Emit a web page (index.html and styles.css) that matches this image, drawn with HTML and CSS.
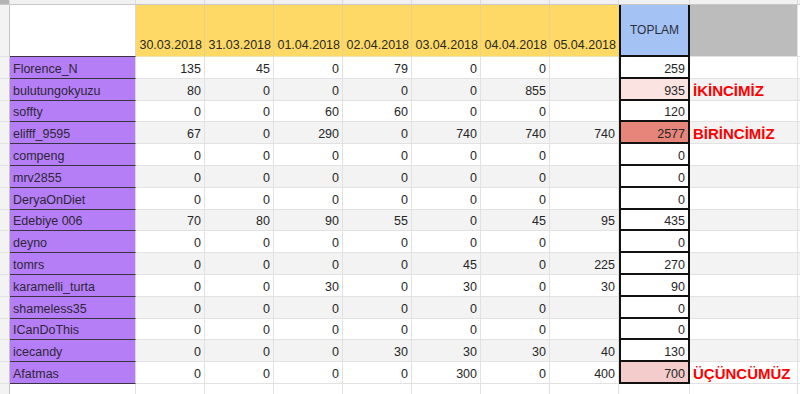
FILE: index.html
```html
<!DOCTYPE html>
<html lang="tr">
<head>
<meta charset="utf-8">
<title>Puan Tablosu</title>
<link rel="stylesheet" href="styles.css">
</head>
<body>
<div class="sheet">
  <div class="row top">
    <div class="c corner"></div><div class="c"></div><div class="c"></div><div class="c"></div><div class="c"></div><div class="c"></div><div class="c"></div><div class="c"></div><div class="c"></div><div class="c"></div><div class="c"></div><div class="c"></div>
  </div>
  <div class="row head">
    <div class="c strip"></div>
    <div class="c name blank"></div>
    <div class="c date">30.03.2018</div>
    <div class="c date">31.03.2018</div>
    <div class="c date">01.04.2018</div>
    <div class="c date">02.04.2018</div>
    <div class="c date">03.04.2018</div>
    <div class="c date">04.04.2018</div>
    <div class="c date">05.04.2018</div>
    <div class="c tot toth">TOPLAM</div>
    <div class="c grayh"></div>
    <div class="c"></div>
  </div>

  <div class="row">
    <div class="c strip"></div><div class="c name">Florence_N</div>
    <div class="c num">135</div><div class="c num">45</div><div class="c num">0</div><div class="c num">79</div><div class="c num">0</div><div class="c num">0</div><div class="c num"></div>
    <div class="c num tot">259</div><div class="c lbl"></div><div class="c"></div>
  </div>
  <div class="row band">
    <div class="c strip"></div><div class="c name">bulutungokyuzu</div>
    <div class="c num">80</div><div class="c num">0</div><div class="c num">0</div><div class="c num">0</div><div class="c num">0</div><div class="c num">855</div><div class="c num"></div>
    <div class="c num tot light">935</div><div class="c lbl">İKİNCİMİZ</div><div class="c"></div>
  </div>
  <div class="row">
    <div class="c strip"></div><div class="c name">soffty</div>
    <div class="c num">0</div><div class="c num">0</div><div class="c num">60</div><div class="c num">60</div><div class="c num">0</div><div class="c num">0</div><div class="c num"></div>
    <div class="c num tot">120</div><div class="c lbl"></div><div class="c"></div>
  </div>
  <div class="row band">
    <div class="c strip"></div><div class="c name">elifff_9595</div>
    <div class="c num">67</div><div class="c num">0</div><div class="c num">290</div><div class="c num">0</div><div class="c num">740</div><div class="c num">740</div><div class="c num">740</div>
    <div class="c num tot red">2577</div><div class="c lbl">BİRİNCİMİZ</div><div class="c"></div>
  </div>
  <div class="row">
    <div class="c strip"></div><div class="c name">compeng</div>
    <div class="c num">0</div><div class="c num">0</div><div class="c num">0</div><div class="c num">0</div><div class="c num">0</div><div class="c num">0</div><div class="c num"></div>
    <div class="c num tot">0</div><div class="c lbl"></div><div class="c"></div>
  </div>
  <div class="row band">
    <div class="c strip"></div><div class="c name">mrv2855</div>
    <div class="c num">0</div><div class="c num">0</div><div class="c num">0</div><div class="c num">0</div><div class="c num">0</div><div class="c num">0</div><div class="c num"></div>
    <div class="c num tot">0</div><div class="c lbl"></div><div class="c"></div>
  </div>
  <div class="row">
    <div class="c strip"></div><div class="c name">DeryaOnDiet</div>
    <div class="c num">0</div><div class="c num">0</div><div class="c num">0</div><div class="c num">0</div><div class="c num">0</div><div class="c num">0</div><div class="c num"></div>
    <div class="c num tot">0</div><div class="c lbl"></div><div class="c"></div>
  </div>
  <div class="row band">
    <div class="c strip"></div><div class="c name">Edebiye 006</div>
    <div class="c num">70</div><div class="c num">80</div><div class="c num">90</div><div class="c num">55</div><div class="c num">0</div><div class="c num">45</div><div class="c num">95</div>
    <div class="c num tot">435</div><div class="c lbl"></div><div class="c"></div>
  </div>
  <div class="row">
    <div class="c strip"></div><div class="c name">deyno</div>
    <div class="c num">0</div><div class="c num">0</div><div class="c num">0</div><div class="c num">0</div><div class="c num">0</div><div class="c num">0</div><div class="c num"></div>
    <div class="c num tot">0</div><div class="c lbl"></div><div class="c"></div>
  </div>
  <div class="row band">
    <div class="c strip"></div><div class="c name">tomrs</div>
    <div class="c num">0</div><div class="c num">0</div><div class="c num">0</div><div class="c num">0</div><div class="c num">45</div><div class="c num">0</div><div class="c num">225</div>
    <div class="c num tot">270</div><div class="c lbl"></div><div class="c"></div>
  </div>
  <div class="row">
    <div class="c strip"></div><div class="c name">karamelli_turta</div>
    <div class="c num">0</div><div class="c num">0</div><div class="c num">30</div><div class="c num">0</div><div class="c num">30</div><div class="c num">0</div><div class="c num">30</div>
    <div class="c num tot">90</div><div class="c lbl"></div><div class="c"></div>
  </div>
  <div class="row band">
    <div class="c strip"></div><div class="c name">shameless35</div>
    <div class="c num">0</div><div class="c num">0</div><div class="c num">0</div><div class="c num">0</div><div class="c num">0</div><div class="c num">0</div><div class="c num"></div>
    <div class="c num tot">0</div><div class="c lbl"></div><div class="c"></div>
  </div>
  <div class="row">
    <div class="c strip"></div><div class="c name">ICanDoThis</div>
    <div class="c num">0</div><div class="c num">0</div><div class="c num">0</div><div class="c num">0</div><div class="c num">0</div><div class="c num">0</div><div class="c num"></div>
    <div class="c num tot">0</div><div class="c lbl"></div><div class="c"></div>
  </div>
  <div class="row band">
    <div class="c strip"></div><div class="c name">icecandy</div>
    <div class="c num">0</div><div class="c num">0</div><div class="c num">0</div><div class="c num">30</div><div class="c num">30</div><div class="c num">30</div><div class="c num">40</div>
    <div class="c num tot">130</div><div class="c lbl"></div><div class="c"></div>
  </div>
  <div class="row">
    <div class="c strip"></div><div class="c name">Afatmas</div>
    <div class="c num">0</div><div class="c num">0</div><div class="c num">0</div><div class="c num">0</div><div class="c num">300</div><div class="c num">0</div><div class="c num">400</div>
    <div class="c num tot pink">700</div><div class="c lbl">ÜÇÜNCÜMÜZ</div><div class="c"></div>
  </div>
  <div class="row last">
    <div class="c strip"></div><div class="c"></div><div class="c"></div><div class="c"></div><div class="c"></div><div class="c"></div><div class="c"></div><div class="c"></div><div class="c"></div><div class="c"></div><div class="c"></div><div class="c"></div>
  </div>
</div>
</body>
</html>
```

FILE: styles.css
```css
html, body {
  margin: 0;
  padding: 0;
  background: #ffffff;
  overflow: hidden;
}

.sheet {
  display: grid;
  grid-template-columns: 10px 126px repeat(7, 69px) 71px 108px 1fr;
  grid-template-rows: 5px 52px repeat(15, 21.8px) 1fr;
  width: 800px;
  height: 394px;
  font-family: "Liberation Sans", Arial, sans-serif;
  font-size: 12.5px;
  color: #262626;
}

.row {
  display: contents;
}

.c {
  box-sizing: border-box;
  border-right: 1px solid #e2e2e2;
  border-bottom: 1px solid #e2e2e2;
  display: flex;
  align-items: flex-end;
  line-height: 15px;
  padding: 0 3px 1px 3px;
  white-space: nowrap;
  min-width: 0;
}

.band > .c {
  background: #f3f3f3;
}

.top > .c {
  background: #f1f1f1;
  border-right-color: #dcdcdc;
  border-bottom-color: #c8c8c8;
  padding: 0;
}

.top > .corner {
  background: #b4b4b4;
}

.c.strip,
.band > .c.strip {
  background: #f3f3f3;
  border-right-color: #c4c4c4;
  padding: 0;
}

.c.name,
.band > .c.name {
  background: #b57ef6;
  color: #2e2638;
  border-bottom-color: #3a3440;
  border-right-color: #d8d8d8;
}

.c.name.blank {
  background: #ffffff;
}

.c.date {
  background: #ffd966;
  border-right-color: #ead08a;
  border-bottom-color: #f0e2b8;
  justify-content: flex-end;
  padding-bottom: 3px;
  padding-right: 2px;
  color: #2a2a2a;
}

.num {
  justify-content: flex-end;
}

.c.tot,
.band > .c.tot {
  background: #ffffff;
  border-left: 2px solid #111111;
  border-right: 2px solid #111111;
  border-bottom: 2px solid #111111;
  padding-bottom: 0;
}

.c.tot.toth {
  background: #a4c2f4;
  justify-content: center;
  align-items: center;
  font-size: 12px;
  color: #2a2f3a;
  padding: 0;
}

.band > .c.tot.light,
.c.tot.light {
  background: #fbe3e1;
}

.band > .c.tot.pink,
.c.tot.pink {
  background: #f4cccc;
}

.band > .c.tot.red,
.c.tot.red {
  background: #e8857b;
}

.c.grayh {
  background: #bcbcbc;
  border-bottom-color: #e2e2e2;
}

.lbl {
  color: #ff0000;
  font-weight: bold;
  font-size: 15px;
  line-height: 17px;
  padding-left: 3px;
  padding-bottom: 1px;
  overflow: visible;
}

.last > .c {
  background: #ffffff;
  border-bottom: none;
}

.last > .c.strip {
  background: #f3f3f3;
}
```
